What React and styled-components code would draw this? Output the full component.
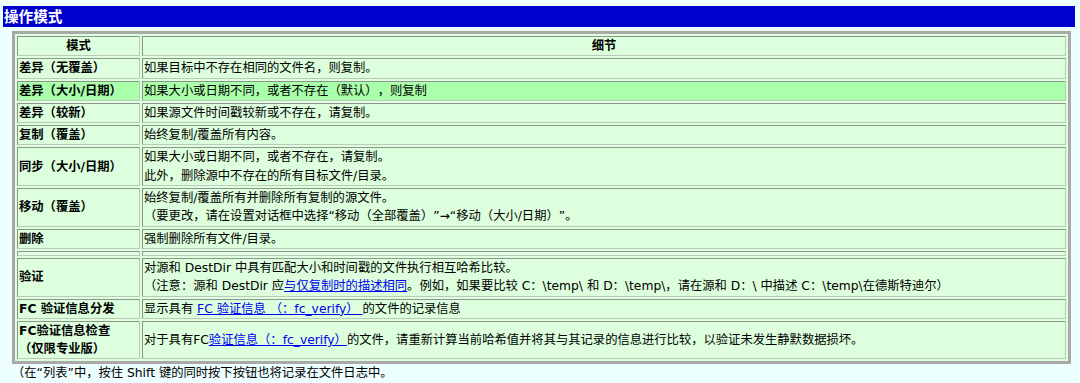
import React from "react";
import styled, { createGlobalStyle } from "styled-components";

const Global = createGlobalStyle`
  html, body { margin: 0; padding: 0; background: #eeffff; }
  body {
    font-family: "DejaVu Sans", "Noto Sans CJK SC", sans-serif;
    font-size: 12.3px;
    color: #000;
    text-spacing-trim: space-all;
  }
`;

const Page = styled.div`
  padding: 6px 5px 0 3px;
`;

const TitleBar = styled.h2`
  margin: 0;
  height: 21px;
  background: #0000cc;
  color: #fff;
  font-size: 14.6px;
  font-weight: bold;
  line-height: 21px;
  padding-left: 1px;
`;

const Table = styled.table`
  margin: 4px 0 0 9px;
  width: 1059px;
  border-collapse: separate;
  border-spacing: 2px;
  border: 3px solid #a9a9a9;
  background: #ddffdd;
  line-height: 18.3px;
`;

const Cell = styled.td`
  padding: 0 1px;
  border-top: 1px solid #8c948c;
  border-left: 1px solid #8c948c;
  border-bottom: 1px solid #bccabc;
  border-right: 1px solid #bccabc;
  background: ${(p) => (p.$hl ? "#aaffaa" : "#ddffdd")};
  vertical-align: middle;
  text-align: left;
  font-weight: normal;
  white-space: nowrap;
`;

const ModeCell = styled(Cell)`
  width: 119px;
  font-weight: bold;
`;

const HeadCell = styled(Cell).attrs({ as: "th" })`
  font-weight: bold;
  text-align: center;
`;

const SpacerCell = styled(Cell)`
  height: 3px;
  padding: 0;
  line-height: 0;
  font-size: 0;
`;

const Link = styled.a`
  color: #0000ee;
  text-decoration: underline;
`;

const Note = styled.p`
  margin: 0 0 0 9px;
  line-height: 18.3px;
`;

const rows = [
  { mode: "差异（无覆盖）", detail: ["如果目标中不存在相同的文件名，则复制。"] },
  { mode: "差异（大小/日期）", detail: ["如果大小或日期不同，或者不存在（默认），则复制"], hl: true },
  { mode: "差异（较新）", detail: ["如果源文件时间戳较新或不存在，请复制。"] },
  { mode: "复制（覆盖）", detail: ["始终复制/覆盖所有内容。"] },
  {
    mode: "同步（大小/日期）",
    detail: ["如果大小或日期不同，或者不存在，请复制。", "此外，删除源中不存在的所有目标文件/目录。"],
  },
  {
    mode: "移动（覆盖）",
    detail: [
      "始终复制/覆盖所有并删除所有复制的源文件。",
      "（要更改，请在设置对话框中选择“移动（全部覆盖）”→“移动（大小/日期）”。",
    ],
  },
  { mode: "删除", detail: ["强制删除所有文件/目录。"] },
];

export default function App() {
  return (
    <Page>
      <Global />
      <TitleBar>操作模式</TitleBar>
      <Table>
        <tbody>
          <tr>
            <HeadCell>模式</HeadCell>
            <HeadCell>细节</HeadCell>
          </tr>
          {rows.map((r) => (
            <tr key={r.mode}>
              <ModeCell $hl={r.hl}>{r.mode}</ModeCell>
              <Cell $hl={r.hl}>
                {r.detail.map((d, i) => (
                  <React.Fragment key={i}>
                    {i > 0 && <br />}
                    {d}
                  </React.Fragment>
                ))}
              </Cell>
            </tr>
          ))}
          <tr>
            <SpacerCell />
            <SpacerCell />
          </tr>
          <tr>
            <ModeCell>验证</ModeCell>
            <Cell>
              对源和 DestDir 中具有匹配大小和时间戳的文件执行相互哈希比较。
              <br />
              （注意：源和 DestDir 应<Link href="#">与仅复制时的描述相同</Link>
              。例如，如果要比较 C：\temp\ 和 D：\temp\，请在源和 D：\ 中描述 C：\temp\在德斯特迪尔）
            </Cell>
          </tr>
          <tr>
            <ModeCell>FC 验证信息分发</ModeCell>
            <Cell>
              显示具有 <Link href="#">FC 验证信息 （：fc_verify） </Link> 的文件的记录信息
            </Cell>
          </tr>
          <tr>
            <ModeCell>
              FC验证信息检查
              <br />
              （仅限专业版）
            </ModeCell>
            <Cell>
              对于具有FC<Link href="#">验证信息（：fc_verify）</Link>
              的文件，请重新计算当前哈希值并将其与其记录的信息进行比较，以验证未发生静默数据损坏。
            </Cell>
          </tr>
        </tbody>
      </Table>
      <Note>（在“列表”中，按住 Shift 键的同时按下按钮也将记录在文件日志中。</Note>
    </Page>
  );
}
